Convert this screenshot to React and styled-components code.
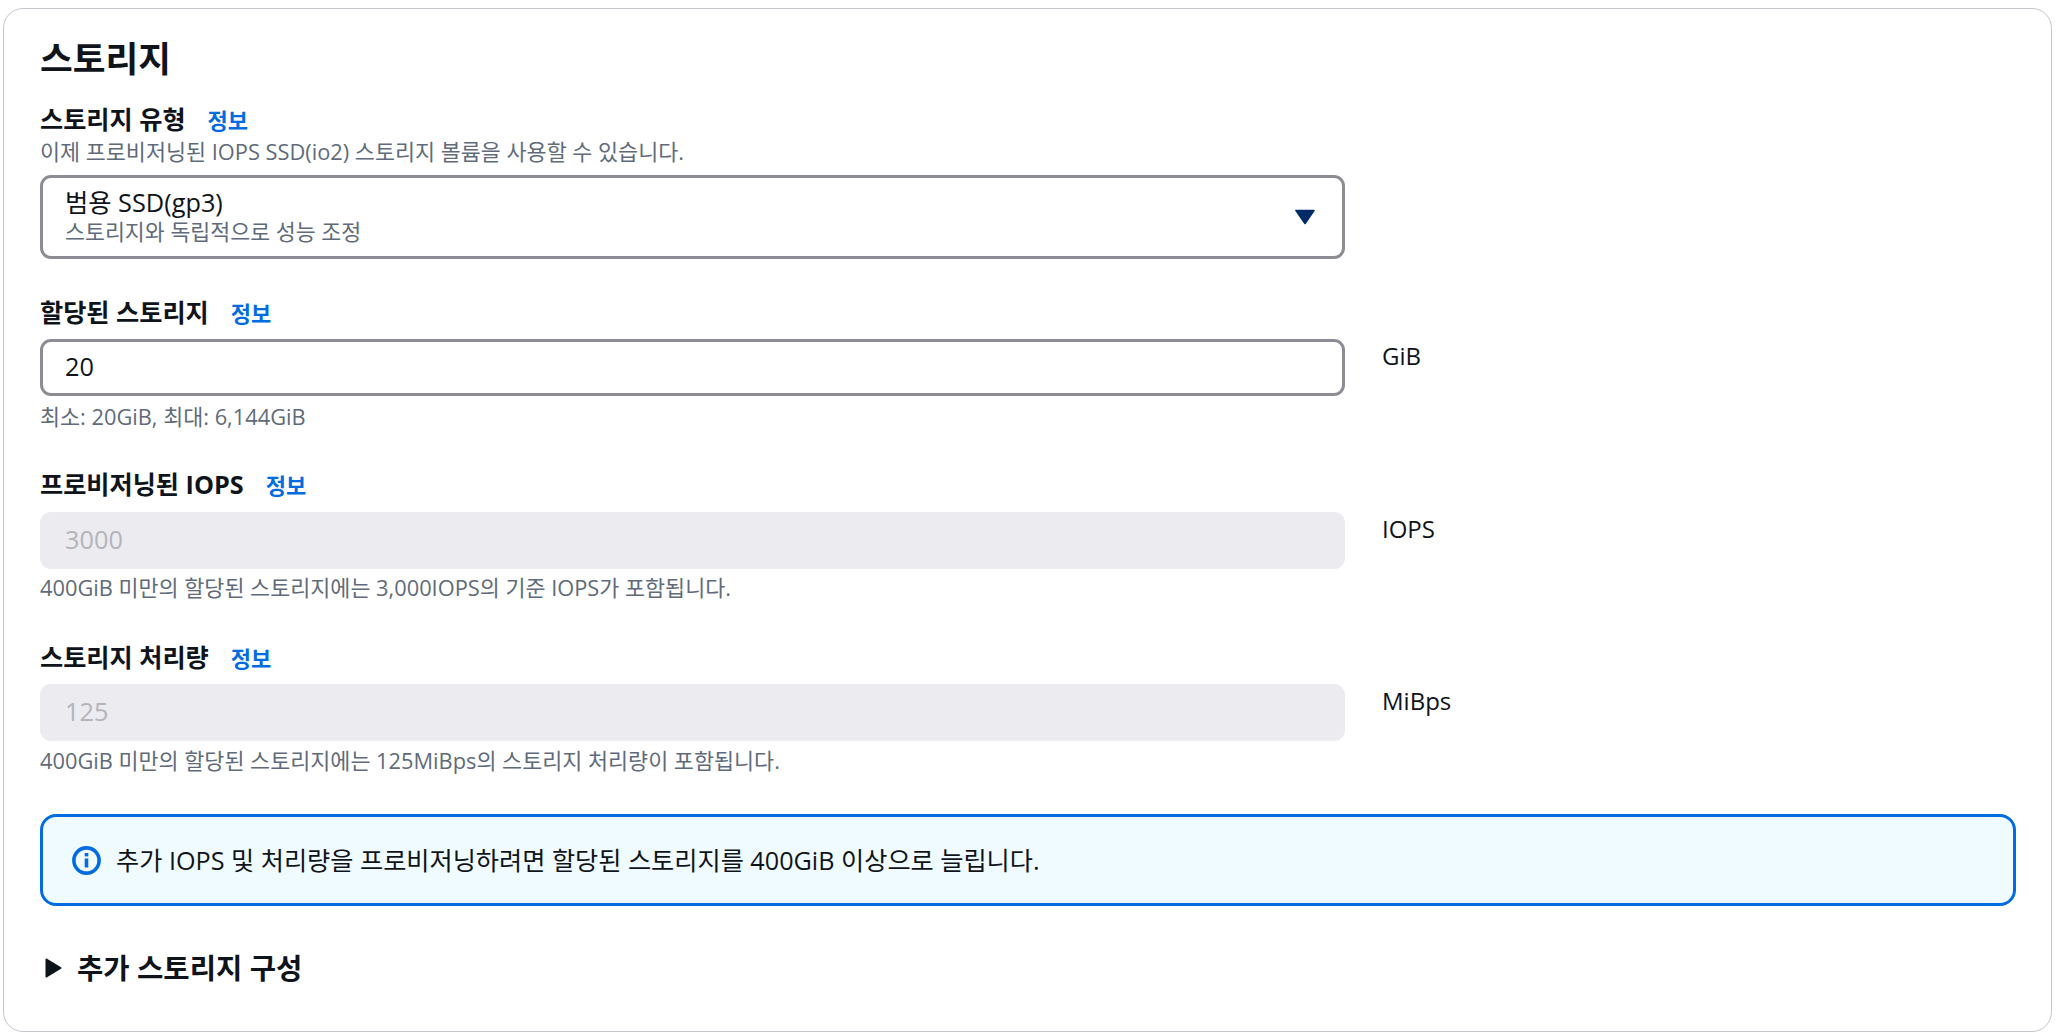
import React from "react";
import styled, { createGlobalStyle } from "styled-components";

const GlobalStyle = createGlobalStyle`
  html, body {
    margin: 0;
    padding: 0;
    background: #ffffff;
  }
  body {
    font-family: "Open Sans", "Noto Sans CJK KR", sans-serif;
    color: #0f141a;
  }
`;

const Page = styled.div`
  width: 2058px;
  height: 1036px;
  box-sizing: border-box;
  padding: 8px 6px 4px 3px;
`;

const Card = styled.section`
  height: 1024px;
  box-sizing: border-box;
  border: 1px solid #c6c6cd;
  border-radius: 20px;
  padding: 27px 35px 0 36px;
`;

const Title = styled.h2`
  margin: 0 0 25px;
  font-size: 35.6px;
  line-height: 44px;
  font-weight: 700;
`;

const Field = styled.div`
  margin-bottom: ${(props) => props.gap}px;
`;

const LabelRow = styled.div`
  display: flex;
  align-items: center;
  gap: 22px;
  height: 28px;
`;

const Label = styled.span`
  font-size: 25.2px;
  font-weight: 700;
  line-height: 28px;
`;

const InfoLink = styled.a`
  font-size: 22px;
  font-weight: 700;
  color: #006ce0;
`;

const Hint = styled.div`
  font-size: 21.8px;
  line-height: 26px;
  margin-top: ${(props) => props.top}px;
  color: #5f6b7a;
`;

const Row = styled.div`
  display: flex;
  gap: 37px;
  margin-top: ${(props) => props.top}px;
`;

const Control = styled.div`
  width: 1305px;
  box-sizing: border-box;
  height: ${(props) => props.h}px;
  margin-top: ${(props) => props.top || 0}px;
  border-radius: 11px;
  padding: 0 27px 3px 22px;
  display: flex;
  align-items: center;
  justify-content: space-between;
  font-size: 25.3px;
  border: 3px solid ${(props) => (props.disabled ? "#ebebf0" : "#8c8c94")};
  background: ${(props) => (props.disabled ? "#ebebf0" : "#ffffff")};
  color: ${(props) => (props.disabled ? "#b4b4bb" : "#0f141a")};
`;

const SelectText = styled.div`
  display: flex;
  flex-direction: column;
`;

const SelectMain = styled.span`
  font-size: 25.3px;
  line-height: 32px;
`;

const SelectSub = styled.span`
  font-size: 21.7px;
  line-height: 28px;
  color: #5f6b7a;
`;

const Caret = styled.svg`
  margin-top: 3px;
`;

const Unit = styled.div`
  font-size: 24px;
  line-height: 34px;
`;

const Alert = styled.div`
  display: flex;
  align-items: center;
  gap: 15px;
  height: 92px;
  box-sizing: border-box;
  margin-top: 40px;
  padding: 0 29px;
  border: 3px solid #006ce0;
  border-radius: 16px;
  background: #f0fbff;
`;

const AlertText = styled.span`
  font-size: 25.2px;
  margin-bottom: 3px;
`;

const Expander = styled.div`
  display: flex;
  align-items: center;
  gap: 15px;
  margin: 44px 0 0 5px;
  font-size: 28.6px;
  line-height: 36px;
  font-weight: 700;
`;

function InfoIcon() {
  return (
    <svg width="29" height="29" viewBox="0 0 29 29" fill="none">
      <circle cx="14.5" cy="14.5" r="12.6" stroke="#006ce0" strokeWidth="3.6" />
      <path d="M14.5 12.5v9" stroke="#006ce0" strokeWidth="3.6" />
      <path d="M14.5 7v3.4" stroke="#006ce0" strokeWidth="3.6" />
    </svg>
  );
}

export default function App() {
  return (
    <Page>
      <GlobalStyle />
      <Card>
        <Title>스토리지</Title>

        <Field gap={39}>
          <LabelRow>
            <Label>스토리지 유형</Label>
            <InfoLink>정보</InfoLink>
          </LabelRow>
          <Hint top={6}>이제 프로비저닝된 IOPS SSD(io2) 스토리지 볼륨을 사용할 수 있습니다.</Hint>
          <Control h={84} top={10}>
            <SelectText>
              <SelectMain>범용 SSD(gp3)</SelectMain>
              <SelectSub>스토리지와 독립적으로 성능 조정</SelectSub>
            </SelectText>
            <Caret width="20" height="16" viewBox="0 0 20 16">
              <path d="M1 1.5h18L10 14.5z" fill="#002b66" stroke="#002b66" strokeWidth="1.6" strokeLinejoin="round" />
            </Caret>
          </Control>
        </Field>

        <Field gap={40}>
          <LabelRow>
            <Label>할당된 스토리지</Label>
            <InfoLink>정보</InfoLink>
          </LabelRow>
          <Row top={13}>
            <Control h={57}>20</Control>
            <Unit>GiB</Unit>
          </Row>
          <Hint top={8}>최소: 20GiB, 최대: 6,144GiB</Hint>
        </Field>

        <Field gap={42}>
          <LabelRow>
            <Label>프로비저닝된 IOPS</Label>
            <InfoLink>정보</InfoLink>
          </LabelRow>
          <Row top={14}>
            <Control h={57} disabled>3000</Control>
            <Unit>IOPS</Unit>
          </Row>
          <Hint top={6}>400GiB 미만의 할당된 스토리지에는 3,000IOPS의 기준 IOPS가 포함됩니다.</Hint>
        </Field>

        <Field gap={0}>
          <LabelRow>
            <Label>스토리지 처리량</Label>
            <InfoLink>정보</InfoLink>
          </LabelRow>
          <Row top={13}>
            <Control h={57} disabled>125</Control>
            <Unit>MiBps</Unit>
          </Row>
          <Hint top={7}>400GiB 미만의 할당된 스토리지에는 125MiBps의 스토리지 처리량이 포함됩니다.</Hint>
        </Field>

        <Alert>
          <InfoIcon />
          <AlertText>추가 IOPS 및 처리량을 프로비저닝하려면 할당된 스토리지를 400GiB 이상으로 늘립니다.</AlertText>
        </Alert>

        <Expander>
          <svg width="17" height="20" viewBox="0 0 17 20">
            <path d="M1.5 1.5L15.5 10 1.5 18.5z" fill="#0f141a" stroke="#0f141a" strokeWidth="2" strokeLinejoin="round" />
          </svg>
          추가 스토리지 구성
        </Expander>
      </Card>
    </Page>
  );
}
